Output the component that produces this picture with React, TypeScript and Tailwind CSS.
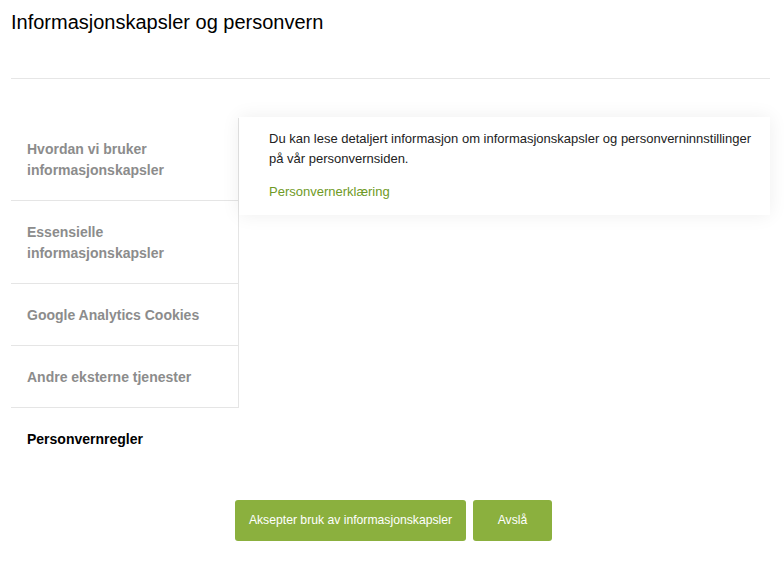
import React from 'react';

const tabs = [
  { label: 'Hvordan vi bruker informasjonskapsler', lines: ['Hvordan vi bruker', 'informasjonskapsler'] },
  { label: 'Essensielle informasjonskapsler', lines: ['Essensielle', 'informasjonskapsler'] },
  { label: 'Google Analytics Cookies', lines: ['Google Analytics Cookies'] },
  { label: 'Andre eksterne tjenester', lines: ['Andre eksterne tjenester'] },
];

export default function App() {
  return (
    <div className="min-h-screen w-full bg-white font-['Liberation_Sans',Arial,sans-serif] text-black">
      <div className="pl-[11px] pr-[14px]">
        <h1 className="pt-[10px] text-[20px] leading-[24px] font-normal">Informasjonskapsler og personvern</h1>
        <div className="mt-[44px] h-px bg-[#e6e6e6]" />

        <div className="mt-[38px] flex">
          <div className="mt-px w-[228px] shrink-0">
            {tabs.map((t) => (
              <button
                key={t.label}
                className="block w-full border-r border-b border-[#e5e5e5] pt-[21px] pb-[19px] pl-4 pr-3 text-left text-[14px] leading-[21px] font-bold text-[#8c8c8c]"
              >
                {t.lines.map((l) => (
                  <span key={l} className="block">
                    {l}
                  </span>
                ))}
              </button>
            ))}
            <button className="block w-full pt-[21px] pb-[19px] pl-4 pr-3 text-left text-[14px] leading-[21px] font-bold text-black">
              Personvernregler
            </button>
          </div>

          <div className="flex-1 self-start">
            <div className="bg-white pl-[30px] pr-[8px] pt-[12px] pb-[13px] shadow-[0_0_18px_rgba(0,0,0,0.07)]">
              <p className="text-[13px] leading-[20px] text-[#222]">
                Du kan lese detaljert informasjon om informasjonskapsler og personverninnstillinger på vår personvernsiden.
              </p>
              <a href="#" className="mt-[13px] block text-[13px] leading-[20px] text-[#6f9a26]">
                Personvernerklæring
              </a>
            </div>
          </div>
        </div>

        <div className="mt-[31px] ml-[6px] flex justify-center gap-[7px]">
          <button className="h-[41px] w-[231px] rounded-[3px] bg-[#8bb03e] text-[12.2px] text-white">
            Aksepter bruk av informasjonskapsler
          </button>
          <button className="h-[41px] w-[79px] rounded-[3px] bg-[#8bb03e] text-[12.2px] text-white">
            Avslå
          </button>
        </div>
      </div>
    </div>
  );
}
